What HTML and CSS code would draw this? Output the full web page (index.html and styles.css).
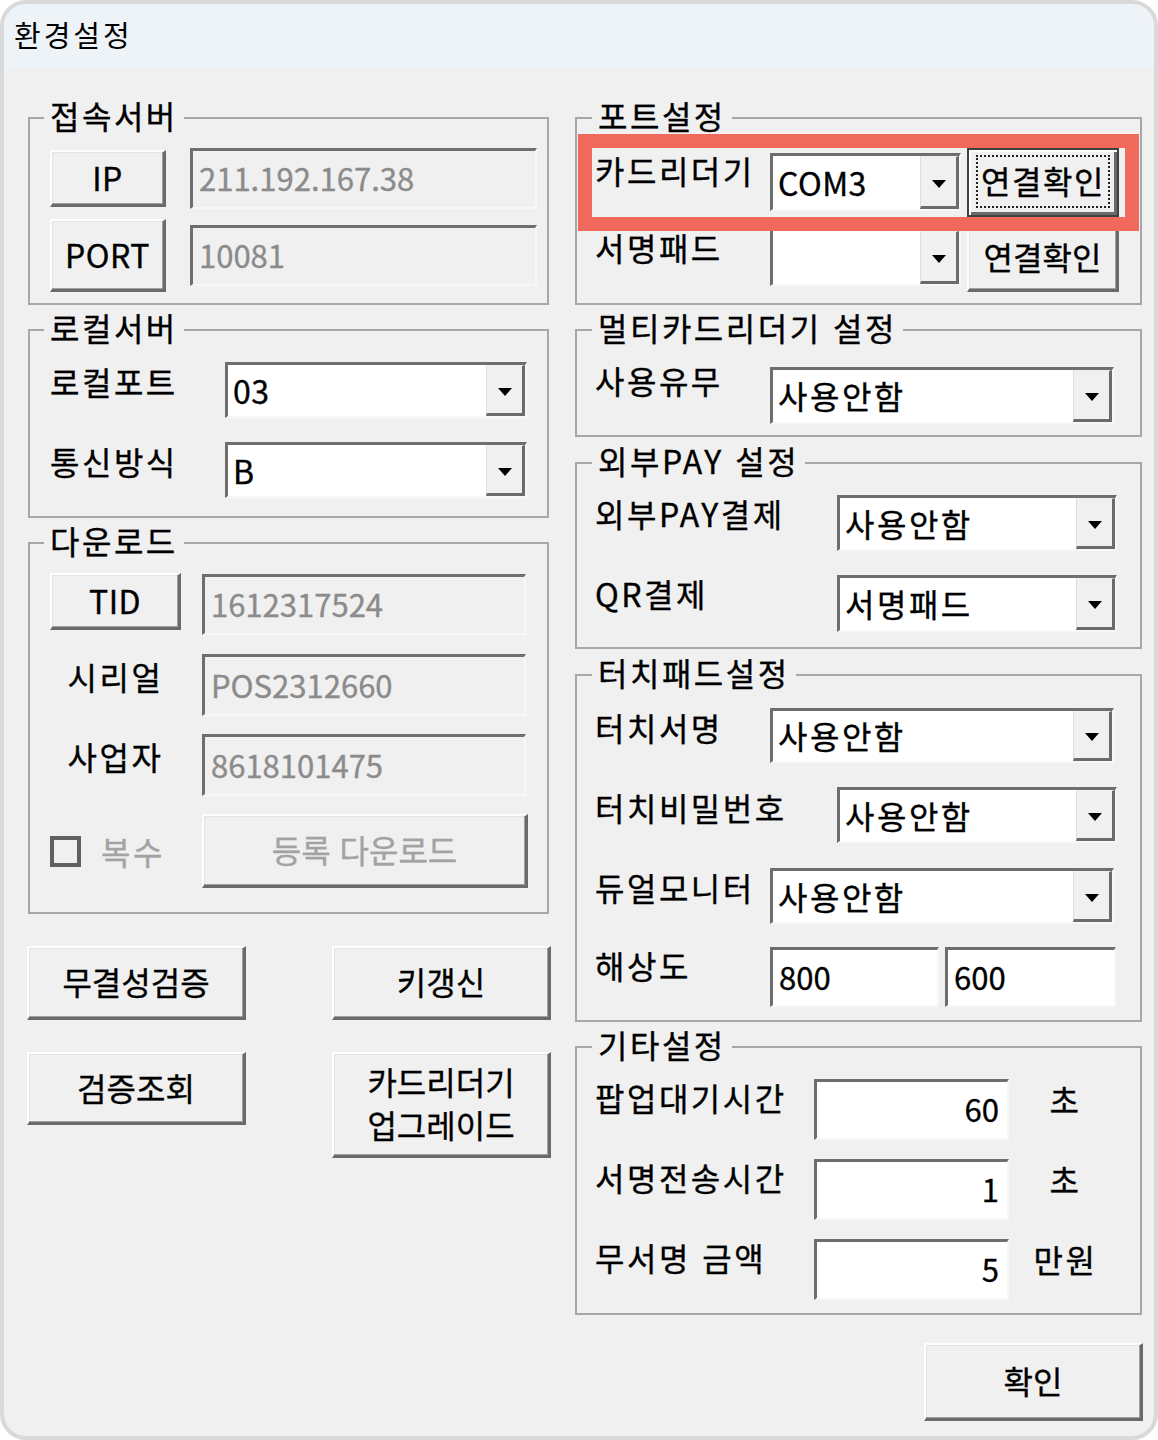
FILE: index.html
```html
<!DOCTYPE html>
<html lang="ko">
<head>
    <meta charset="UTF-8">
    <title>환경설정</title>
    <link rel="stylesheet" href="styles.css">
</head>
<body>
    <div class="window">
        <div class="titlebar">환경설정</div>

        <div class="content">
            <!-- left column -->
            <div class="col col-left">
                <fieldset class="group g-server">
                    <legend>접속서버</legend>
                    <div class="row mid">
                        <button class="btn latin w116 h57">IP</button>
                        <input class="field off w347 h61 ml24" value="211.192.167.38" disabled>
                    </div>
                    <div class="row mid mt10">
                        <button class="btn latin w116 h73">PORT</button>
                        <input class="field off w347 h61 ml24" value="10081" disabled>
                    </div>
                </fieldset>

                <fieldset class="group g-local">
                    <legend>로컬서버</legend>
                    <div class="row">
                        <span class="lbl w175 mt1">로컬포트</span>
                        <div class="combo w302 h56"><span class="val latin">03</span><span class="drop"></span></div>
                    </div>
                    <div class="row mt24">
                        <span class="lbl w175 mt1">통신방식</span>
                        <div class="combo w302 h56"><span class="val latin">B</span><span class="drop"></span></div>
                    </div>
                </fieldset>

                <fieldset class="group g-download">
                    <legend>다운로드</legend>
                    <div class="row">
                        <button class="btn latin w131 h57">TID</button>
                        <input class="field off w324 h61 ml21 mt1" value="1612317524" disabled>
                    </div>
                    <div class="row mt19">
                        <span class="lbl w131 center mt4">시리얼</span>
                        <input class="field off w324 h62 ml21" value="POS2312660" disabled>
                    </div>
                    <div class="row mt18">
                        <span class="lbl w131 center mt4">사업자</span>
                        <input class="field off w324 h62 ml21" value="8618101475" disabled>
                    </div>
                    <div class="row mid mt18">
                        <label class="multi w131">
                            <input type="checkbox" class="check" disabled>
                            <span class="muted">복수</span>
                        </label>
                        <button class="btn w326 h74 ml21" disabled>등록 다운로드</button>
                    </div>
                </fieldset>

                <div class="actions">
                    <button class="btn h74">무결성검증</button>
                    <button class="btn h74">키갱신</button>
                    <button class="btn h73">검증조회</button>
                    <button class="btn h106 two-line">카드리더기<br>업그레이드</button>
                </div>
            </div>

            <!-- right column -->
            <div class="col col-right">
                <fieldset class="group g-port">
                    <legend>포트설정</legend>
                    <div class="row marked">
                        <span class="lbl w175 mt4">카드리더기</span>
                        <div class="combo w191 h58 mt5"><span class="val latin">COM3</span><span class="drop"></span></div>
                        <button class="btn default w152 h69 ml6"><span class="focus">연결확인</span></button>
                    </div>
                    <div class="row mt6">
                        <span class="lbl w175 mt6">서명패드</span>
                        <div class="combo w191 h58 mt5"><span class="val"></span><span class="drop"></span></div>
                        <button class="btn w152 h69 ml6">연결확인</button>
                    </div>
                </fieldset>

                <fieldset class="group g-multi">
                    <legend>멀티카드리더기 설정</legend>
                    <div class="row">
                        <span class="lbl w175">사용유무</span>
                        <div class="combo w344 h57 mt5"><span class="val">사용안함</span><span class="drop"></span></div>
                    </div>
                </fieldset>

                <fieldset class="group g-pay">
                    <legend>외부PAY 설정</legend>
                    <div class="row">
                        <span class="lbl w242">외부PAY결제</span>
                        <div class="combo w280 h56"><span class="val">사용안함</span><span class="drop"></span></div>
                    </div>
                    <div class="row mt24">
                        <span class="lbl w242">QR결제</span>
                        <div class="combo w280 h57"><span class="val">서명패드</span><span class="drop"></span></div>
                    </div>
                </fieldset>

                <fieldset class="group g-touch">
                    <legend>터치패드설정</legend>
                    <div class="row">
                        <span class="lbl w175 mt1">터치서명</span>
                        <div class="combo w344 h55"><span class="val">사용안함</span><span class="drop"></span></div>
                    </div>
                    <div class="row mt24">
                        <span class="lbl w242 mt2">터치비밀번호</span>
                        <div class="combo w280 h56"><span class="val">사용안함</span><span class="drop"></span></div>
                    </div>
                    <div class="row mt25">
                        <span class="lbl w175 mt1">듀얼모니터</span>
                        <div class="combo w344 h56"><span class="val">사용안함</span><span class="drop"></span></div>
                    </div>
                    <div class="row mt23">
                        <span class="lbl w175">해상도</span>
                        <input class="field w169 h60" value="800">
                        <input class="field w171 h60 ml6" value="600">
                    </div>
                </fieldset>

                <fieldset class="group g-etc">
                    <legend>기타설정</legend>
                    <div class="row">
                        <span class="lbl w219">팝업대기시간</span>
                        <input class="field num w195 h61" value="60">
                        <span class="unit">초</span>
                    </div>
                    <div class="row mt19">
                        <span class="lbl w219">서명전송시간</span>
                        <input class="field num w195 h61" value="1">
                        <span class="unit">초</span>
                    </div>
                    <div class="row mt19">
                        <span class="lbl w219">무서명 금액</span>
                        <input class="field num w195 h61" value="5">
                        <span class="unit">만원</span>
                    </div>
                </fieldset>

                <button class="btn ok-btn">확인</button>
            </div>
        </div>
    </div>
</body>
</html>
```

FILE: styles.css
```css
* {
    box-sizing: border-box;
}

body {
    margin: 0;
    background-color: #ffffff;
    font-family: "Noto Sans CJK KR", "Noto Sans", sans-serif;
    font-size: 32px;
    letter-spacing: 2.5px;
    color: #000;
    -webkit-text-stroke: 0.35px currentColor;
}

.latin {
    letter-spacing: 0.5px;
}

.window {
    width: 1158px;
    height: 1440px;
    border: 4px solid #d9d9d9;
    border-radius: 26px;
    background-color: #f0f0f0;
    overflow: hidden;
}

.titlebar {
    height: 64px;
    padding: 12px 0 0 10px;
    background-color: #eef3f8;
    font-size: 29px;
    line-height: 36px;
    letter-spacing: 3px;
    -webkit-text-stroke: 0;
}

.content {
    display: flex;
    gap: 23px;
    padding: 30px 0 0 23px;
}

.col {
    display: flex;
    flex-direction: column;
}

.col-left {
    width: 524px;
}

.col-right {
    width: 569px;
}

/* group boxes */
.group {
    margin: 0 0 0 1px;
    border: 2px solid #a7a7a7;
    padding: 0;
    min-width: 0;
}

.group legend {
    padding: 0 6px 6px;
    line-height: 34px;
}

.col-left .group {
    width: 521px;
    padding-left: 20px;
}

.col-left .group legend {
    margin-left: -6px;
}

.col-right .group {
    width: 567px;
    padding-left: 18px;
}

.col-right .group legend {
    margin-left: -3px;
}

.g-server   { height: 207px; padding-top: 10px; }
.g-local    { height: 208px; padding-top: 12px; margin-top: 5px; }
.g-download { height: 391px; padding-top: 10px; margin-top: 5px; }

.g-port  { height: 207px; padding-top: 10px; }
.g-multi { height: 127px; padding-top: 12px; margin-top: 5px; }
.g-pay   { height: 206px; padding-top: 12px; margin-top: 6px; }
.g-touch { height: 367px; padding-top: 13px; margin-top: 6px; }
.g-etc   { height: 288px; padding-top: 12px; margin-top: 5px; }

/* rows */
.row {
    display: flex;
    align-items: flex-start;
}

.row.mid {
    align-items: center;
}

.row.marked {
    position: relative;
}

.row.marked::after {
    content: "";
    position: absolute;
    top: -14px;
    bottom: -14px;
    left: -17px;
    right: 1px;
    border: 14px solid #ef6a5a;
    pointer-events: none;
}

.lbl {
    flex: none;
    line-height: 36px;
    white-space: nowrap;
}

.lbl.center {
    text-align: center;
}

.unit {
    width: 113px;
    margin-top: 2px;
    line-height: 36px;
    text-align: center;
}

.muted {
    color: #a2a2a2;
}

/* sunken inputs */
.field {
    flex: none;
    margin: 0;
    padding: 0 6px 3px;
    border-style: solid;
    border-width: 3px 2px 2px 3px;
    border-color: #6e6e6e #f7f7f7 #f7f7f7 #6e6e6e;
    background-color: #ffffff;
    font: inherit;
    font-size: 31px;
    letter-spacing: 0;
    color: #000;
    outline: none;
}

.field.off {
    background-color: #f0f0f0;
    color: #8b8b8b;
}

.field.num {
    text-align: right;
    padding-right: 8px;
}

/* combo boxes */
.combo {
    flex: none;
    display: flex;
    border-style: solid;
    border-width: 3px 2px 2px 3px;
    border-color: #6e6e6e #f7f7f7 #f7f7f7 #6e6e6e;
    background-color: #ffffff;
}

.combo .val {
    flex: 1;
    display: flex;
    align-items: center;
    padding: 0 0 2px 5px;
    white-space: nowrap;
}

.combo .drop {
    width: 39px;
    display: flex;
    align-items: center;
    justify-content: center;
    padding-top: 4px;
    background-color: #f0f0f0;
    border-style: solid;
    border-width: 1px 3px 3px 1px;
    border-color: #f0f0f0 #6b6b6b #6b6b6b #dedede;
}

.combo .drop::after {
    content: "";
    border-left: 7px solid transparent;
    border-right: 7px solid transparent;
    border-top: 8px solid #000;
}

/* raised buttons */
.btn {
    flex: none;
    margin: 0;
    padding: 0 0 3px;
    background-color: #f0f0f0;
    border-style: solid;
    border-width: 2px 3px 3px 2px;
    border-color: #fdfdfd #6a6a6a #6a6a6a #fdfdfd;
    box-shadow: inset -1px -1px 0 #a0a0a0, inset 1px 1px 0 #e3e3e3;
    font: inherit;
    color: #000;
    cursor: pointer;
}

.btn:disabled {
    color: #a2a2a2;
    cursor: default;
}

.btn.default {
    border: 2px solid #404040;
    box-shadow: inset 2px 2px 0 #fdfdfd, inset -3px -3px 0 #6a6a6a;
    display: flex;
    align-items: center;
    justify-content: center;
    padding: 0;
}

.btn .focus {
    width: 134px;
    height: 53px;
    display: flex;
    align-items: center;
    justify-content: center;
    border: 2px dotted #222;
    margin-top: -2px;
    padding-bottom: 3px;
    letter-spacing: 1.5px;
}

.two-line {
    line-height: 43px;
}

.multi {
    display: flex;
    align-items: center;
}

.check {
    appearance: none;
    width: 31px;
    height: 31px;
    margin: 0 20px 0 0;
    border: 4px solid #606060;
    background-color: #f0f0f0;
}

.actions {
    display: grid;
    grid-template-columns: 219px 219px;
    column-gap: 86px;
    row-gap: 32px;
    align-items: start;
    margin-top: 32px;
}

.ok-btn {
    align-self: flex-end;
    width: 219px;
    height: 78px;
    margin-top: 28px;
}

/* sizes */
.w116 { width: 116px; }
.w131 { width: 131px; }
.w152 { width: 152px; }
.w169 { width: 169px; }
.w171 { width: 171px; }
.w175 { width: 175px; }
.w191 { width: 191px; }
.w195 { width: 195px; }
.w219 { width: 219px; }
.w242 { width: 242px; }
.w280 { width: 280px; }
.w302 { width: 302px; }
.w324 { width: 324px; }
.w326 { width: 326px; }
.w344 { width: 344px; }
.w347 { width: 347px; }

.h55 { height: 55px; }
.h56 { height: 56px; }
.h57 { height: 57px; }
.h58 { height: 58px; }
.h60 { height: 60px; }
.h61 { height: 61px; }
.h62 { height: 62px; }
.h69 { height: 69px; }
.h73 { height: 73px; }
.h74 { height: 74px; }
.h106 { height: 106px; }

.mt1 { margin-top: 1px; }
.mt2 { margin-top: 2px; }
.mt3 { margin-top: 3px; }
.mt4 { margin-top: 4px; }
.mt5 { margin-top: 5px; }
.mt6 { margin-top: 6px; }
.mt10 { margin-top: 10px; }
.mt18 { margin-top: 18px; }
.mt19 { margin-top: 19px; }
.mt23 { margin-top: 23px; }
.mt24 { margin-top: 24px; }
.mt25 { margin-top: 25px; }

.ml6 { margin-left: 6px; }
.ml21 { margin-left: 21px; }
.ml24 { margin-left: 24px; }
```
